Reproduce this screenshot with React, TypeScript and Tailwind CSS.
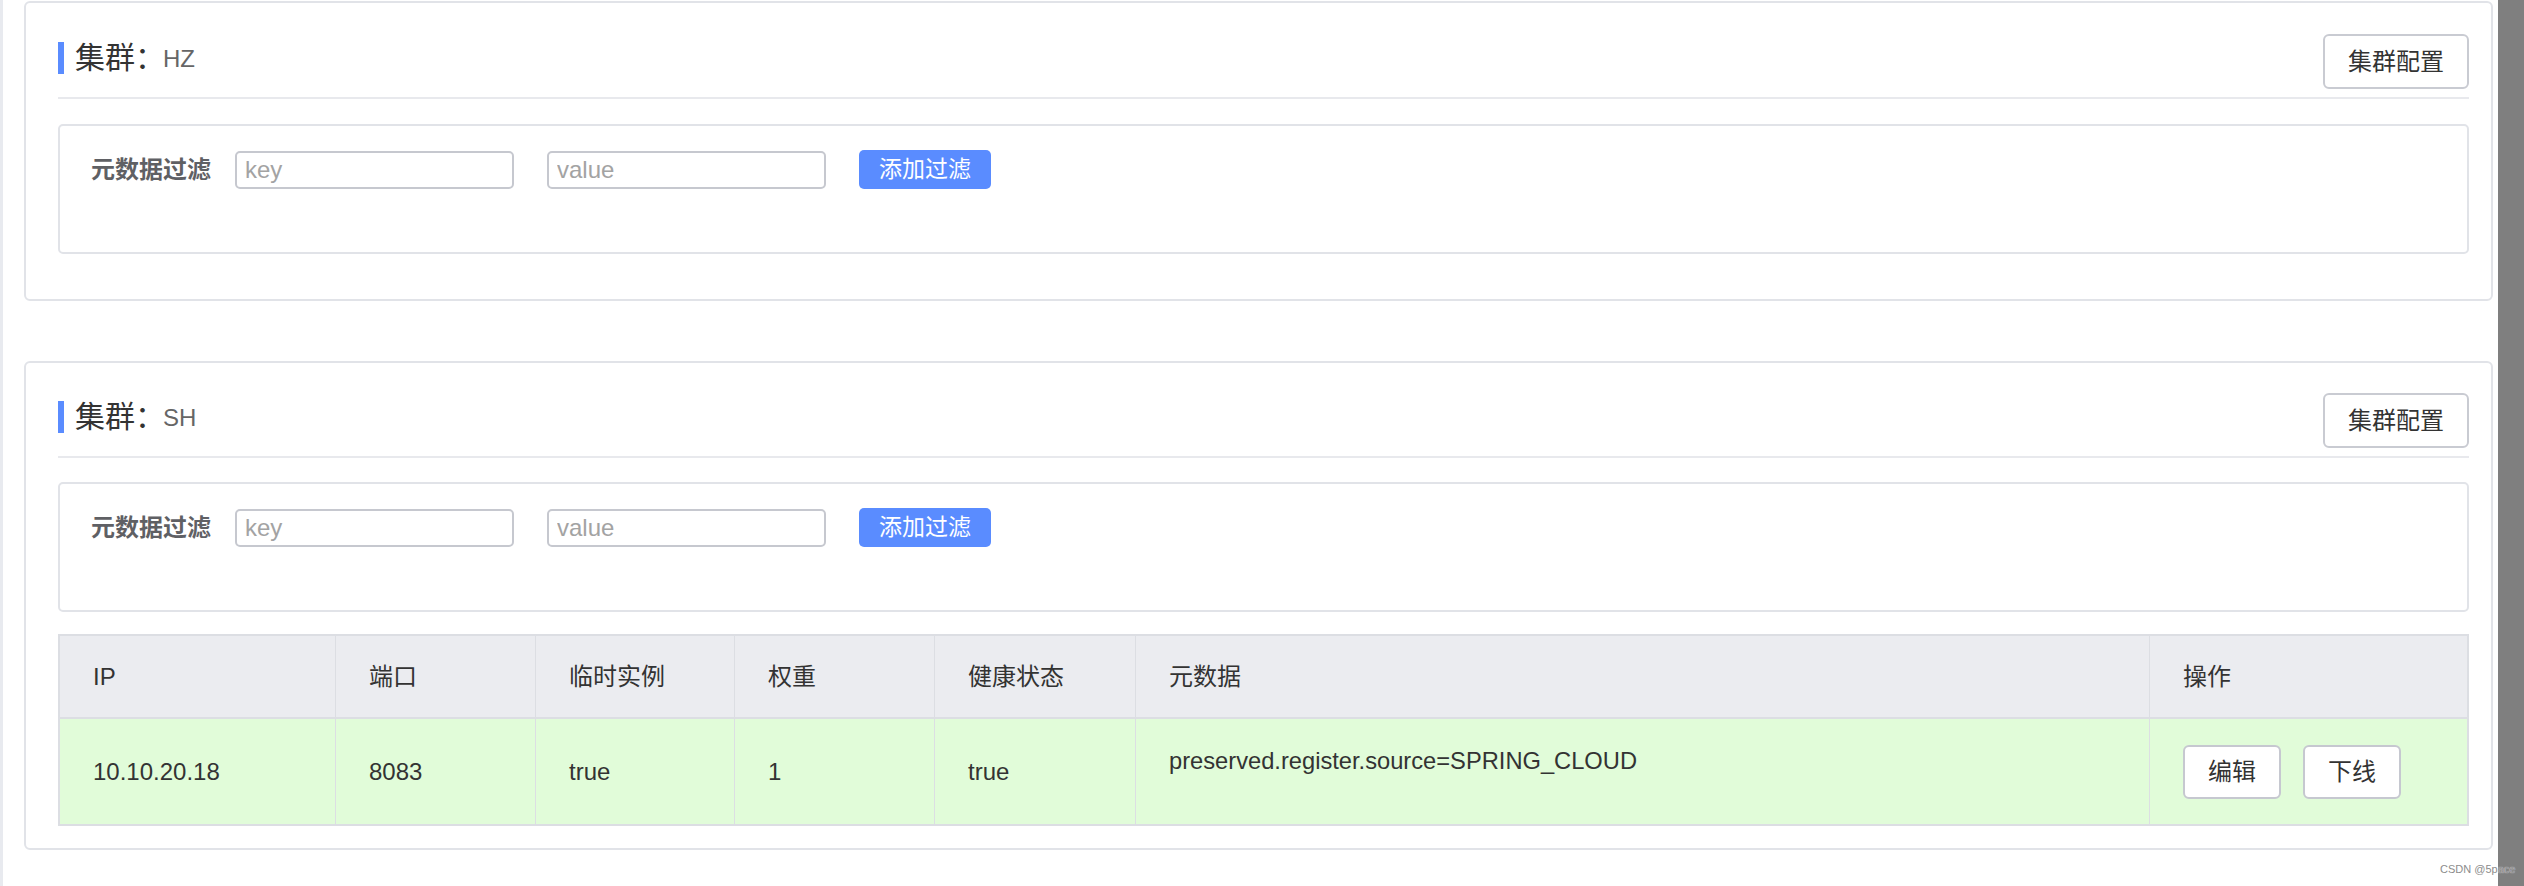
const font = "font-['Liberation_Sans','Noto_Sans_CJK_SC',sans-serif]";

const columns = [
  { title: "IP", width: "w-[275px]" },
  { title: "端口", width: "w-[200px]" },
  { title: "临时实例", width: "w-[199px]" },
  { title: "权重", width: "w-[200px]" },
  { title: "健康状态", width: "w-[201px]" },
  { title: "元数据", width: "w-[1014px]" },
  { title: "操作", width: "w-[318px]" },
];

const rows = [
  {
    ip: "10.10.20.18",
    port: "8083",
    ephemeral: "true",
    weight: "1",
    healthy: "true",
    metadata: "preserved.register.source=SPRING_CLOUD",
  },
];

function ClusterHeader({ name }: { name: string }) {
  return (
    <div className="flex items-center justify-between h-[55px]">
      <div className="flex items-center mb-[7px]">
        <div className="w-[6px] h-[32px] bg-[#5a8cff]" />
        <span className="ml-[11px] text-[30px] leading-none text-[#333]">集群：</span>
        <span className="text-[24px] leading-none text-[#666] mt-[2px] -ml-[2px]">{name}</span>
      </div>
      <button className="w-[146px] h-[55px] border-2 border-[#c9cbd2] rounded-[6px] bg-white text-[24px] text-[#333]">
        集群配置
      </button>
    </div>
  );
}

function FilterBox() {
  return (
    <div className="h-[130px] border-2 border-[#e1e3e8] rounded-[5px] pt-[24px] pl-[31px]">
      <div className="flex items-center">
        <span className="text-[24px] font-bold text-[#5f6064] w-[120px] whitespace-nowrap">元数据过滤</span>
        <input
          placeholder="key"
          className="ml-[24px] w-[279px] h-[38px] border-2 border-[#c6c8cf] rounded-[5px] px-[8px] text-[24px] text-[#333] placeholder:text-[#a3a3a3] outline-none"
        />
        <input
          placeholder="value"
          className="ml-[33px] w-[279px] h-[38px] border-2 border-[#c6c8cf] rounded-[5px] px-[8px] text-[24px] text-[#333] placeholder:text-[#a3a3a3] outline-none"
        />
        <button className="ml-[33px] w-[132px] h-[39px] rounded-[5px] bg-[#5a8cff] text-white text-[23px]">
          添加过滤
        </button>
      </div>
    </div>
  );
}

function InstanceTable() {
  return (
    <div className="mt-[22px] border-2 border-[#dcdee3] text-[24px] text-[#333]">
      <div className="flex h-[83px] bg-[#ebecf0] border-b-2 border-[#dcdee3]">
        {columns.map((c, i) => (
          <div
            key={c.title}
            className={`${c.width} flex items-center pl-[33px] ${i > 0 ? "border-l border-[#dcdee3]" : ""}`}
          >
            {c.title}
          </div>
        ))}
      </div>
      {rows.map((r) => (
        <div key={r.ip} className="flex h-[105px] bg-[#e1fcd9]">
          <div className="w-[275px] flex items-center pl-[33px]">{r.ip}</div>
          <div className="w-[200px] flex items-center pl-[33px] border-l border-[#dcdee3]">{r.port}</div>
          <div className="w-[199px] flex items-center pl-[33px] border-l border-[#dcdee3]">{r.ephemeral}</div>
          <div className="w-[200px] flex items-center pl-[33px] border-l border-[#dcdee3]">{r.weight}</div>
          <div className="w-[201px] flex items-center pl-[33px] border-l border-[#dcdee3]">{r.healthy}</div>
          <div className="w-[1014px] pl-[33px] pt-[25px] border-l border-[#dcdee3] text-[23.7px]">{r.metadata}</div>
          <div className="w-[318px] flex items-center pl-[33px] gap-[22px] border-l border-[#dcdee3]">
            <button className="w-[98px] h-[54px] border-2 border-[#c6c8d0] rounded-[6px] bg-white">编辑</button>
            <button className="w-[98px] h-[54px] border-2 border-[#c6c8d0] rounded-[6px] bg-white">下线</button>
          </div>
        </div>
      ))}
    </div>
  );
}

export default function App() {
  return (
    <div className={`relative w-[2524px] h-[886px] bg-white overflow-hidden flex ${font}`}>
      <div className="w-[3px] h-full bg-[#e8eaef]" />
      <div className="w-[2495px] pl-[21px] pr-[5px]">
        <div className="mt-[1px] border-2 border-[#e1e3e8] rounded-[6px] pt-[31px] pl-[32px] pr-[22px] pb-[45px]">
          <ClusterHeader name="HZ" />
          <div className="mt-[8px] h-[2px] bg-[#e8e9ed]" />
          <div className="mt-[25px]">
            <FilterBox />
          </div>
        </div>

        <div className="mt-[60px] border-2 border-[#e1e3e8] rounded-[6px] pt-[30px] pl-[32px] pr-[22px] pb-[22px]">
          <ClusterHeader name="SH" />
          <div className="mt-[8px] h-[2px] bg-[#e8e9ed]" />
          <div className="mt-[24px]">
            <FilterBox />
          </div>
          <InstanceTable />
        </div>
      </div>
      <div className="w-[26px] h-full bg-[#7f7f7f]" />
      <div className="absolute z-10 left-[2440px] top-[864px] text-[11px] text-[#8c8c8c] leading-none [text-shadow:0_0_1px_#fff]">
        CSDN @5pace
      </div>
    </div>
  );
}
